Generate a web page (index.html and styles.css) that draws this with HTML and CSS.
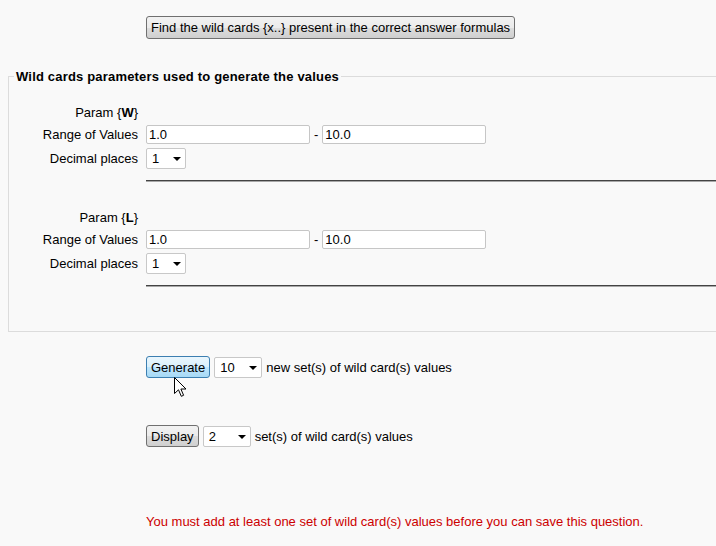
FILE: index.html
```html
<!DOCTYPE html>
<html>
<head>
<meta charset="utf-8">
<link rel="stylesheet" href="styles.css">
</head>
<body>
<div class="page">
  <div class="top-row">
    <button class="btn">Find the wild cards {x..} present in the correct answer formulas</button>
  </div>

  <fieldset class="params">
    <legend>Wild cards parameters used to generate the values</legend>

    <div class="group">
      <div class="lbl">Param {<b>W</b>}</div>
      <div class="val"></div>
      <div class="lbl">Range of Values</div>
      <div class="val range"><input class="txt" value="1.0"><span>-</span><input class="txt" value="10.0"></div>
      <div class="lbl">Decimal places</div>
      <div class="val"><span class="sel w40"><select><option>1</option></select></span></div>
      <div class="val rule"><hr></div>
    </div>

    <div class="group">
      <div class="lbl">Param {<b>L</b>}</div>
      <div class="val"></div>
      <div class="lbl">Range of Values</div>
      <div class="val range"><input class="txt" value="1.0"><span>-</span><input class="txt" value="10.0"></div>
      <div class="lbl">Decimal places</div>
      <div class="val"><span class="sel w40"><select><option>1</option></select></span></div>
      <div class="val rule"><hr></div>
    </div>
  </fieldset>

  <div class="action gen">
    <span class="pointer-wrap"><button class="btn hover">Generate</button>
      <svg class="cursor" width="13" height="21" viewBox="0 0 13 21"><path d="M0.5 0.5 L0.5 16.5 L4.5 12.8 L7.3 19.3 L9.6 18.3 L6.9 12 L12 12 Z" fill="#fff" stroke="#000" stroke-width="1" stroke-linejoin="miter"/></svg>
    </span>
    <span class="sel w48"><select><option>10</option></select></span>
    <span class="txtlabel">new set(s) of wild card(s) values</span>
  </div>

  <div class="action disp">
    <button class="btn">Display</button>
    <span class="sel w48"><select><option>2</option></select></span>
    <span class="txtlabel">set(s) of wild card(s) values</span>
  </div>

  <div class="error">You must add at least one set of wild card(s) values before you can save this question.</div>
</div>
</body>
</html>
```
FILE: styles.css
```css
html, body {
  margin: 0;
  padding: 0;
  overflow: hidden;
  background: #f9f9f9;
}
body {
  font-family: "Liberation Sans", Arial, sans-serif;
  font-size: 13px;
  color: #000;
  width: 716px;
  height: 546px;
}
.page {
  display: flex;
  flex-direction: column;
}
.top-row {
  padding: 16px 0 0 146px;
  height: 23px;
}
.btn {
  font-family: "Liberation Sans", Arial, sans-serif;
  font-size: 13px;
  color: #000;
  height: 23px;
  padding: 0 4px;
  border: 1px solid #707070;
  border-radius: 3px;
  background: linear-gradient(#f2f2f2 0%, #ebebeb 50%, #dddddd 51%, #cfcfcf 100%);
  line-height: 19px;
  margin: 0;
}
.btn.hover {
  border-color: #3c7fb1;
  background: linear-gradient(#eaf6fd 0%, #d9f0fc 50%, #bee6fd 51%, #a7d9f5 100%);
}
.params {
  margin: 30px 0 0 8px;
  padding: 19px 0 44px 0;
  border: 1px solid #dcdcdc;
  border-right: none;
  min-width: 0;
}
.params legend {
  font-weight: bold;
  font-size: 13px;
  line-height: 15px;
  padding: 0 2px;
  margin-left: 5px;
  letter-spacing: 0.18px;
}
.group {
  display: grid;
  grid-template-columns: 129px 1fr;
  column-gap: 8px;
  grid-auto-rows: auto;
}
.group + .group {
  margin-top: 26px;
}
.lbl {
  text-align: right;
  display: flex;
  align-items: center;
  justify-content: flex-end;
}
.group .lbl:nth-child(1), .group .val:nth-child(2) {
  height: 18px;
}
.group .lbl:nth-child(3), .group .val:nth-child(4) {
  height: 20px;
  margin-top: 3px;
}
.group .lbl:nth-child(5), .group .val:nth-child(6) {
  height: 22px;
  margin-top: 3px;
}
.val {
  display: flex;
  align-items: center;
}
.range {
  gap: 4px;
}
.txt {
  box-sizing: border-box;
  width: 164px;
  height: 19px;
  margin: 0;
  padding: 0 2px;
  border: 1px solid #c6c6c6;
  border-radius: 2px;
  background: #fff;
  font-family: "Liberation Sans", Arial, sans-serif;
  font-size: 13px;
  color: #000;
}
.rule {
  grid-column: 2;
  margin-top: 11px;
}
.rule hr {
  width: 100%;
  margin: 0;
  height: 0;
  border: none;
  border-top: 1px solid #444;
  border-bottom: 1px solid #a8a8a8;
}
.sel {
  position: relative;
  display: inline-block;
}
.sel select {
  -webkit-appearance: none;
  appearance: none;
  box-sizing: border-box;
  height: 21px;
  margin: 0;
  padding: 0 0 0 5px;
  border: 1px solid #c8c8c8;
  border-radius: 2px;
  background: #fff;
  font-family: "Liberation Sans", Arial, sans-serif;
  font-size: 13px;
  color: #000;
  display: block;
}
.sel.w40 select { width: 40px; }
.sel.w48 select { width: 48px; }
.sel::after {
  content: "";
  position: absolute;
  right: 5px;
  top: 9px;
  border-left: 4px solid transparent;
  border-right: 4px solid transparent;
  border-top: 4px solid #000;
  pointer-events: none;
}
.action {
  display: flex;
  align-items: center;
  padding-left: 146px;
  height: 22px;
  gap: 4px;
}
.action .btn { height: 22px; padding: 0 4px; }
.gen {
  margin-top: 24px;
}
.disp {
  margin-top: 47px;
}
.pointer-wrap {
  position: relative;
  display: inline-block;
}
.pointer-wrap .btn {
  display: block;
}
.cursor {
  position: absolute;
  left: 28px;
  top: 21px;
}
.error {
  margin-top: 67px;
  padding-left: 146px;
  color: #cc0000;
  line-height: 16px;
}
```
